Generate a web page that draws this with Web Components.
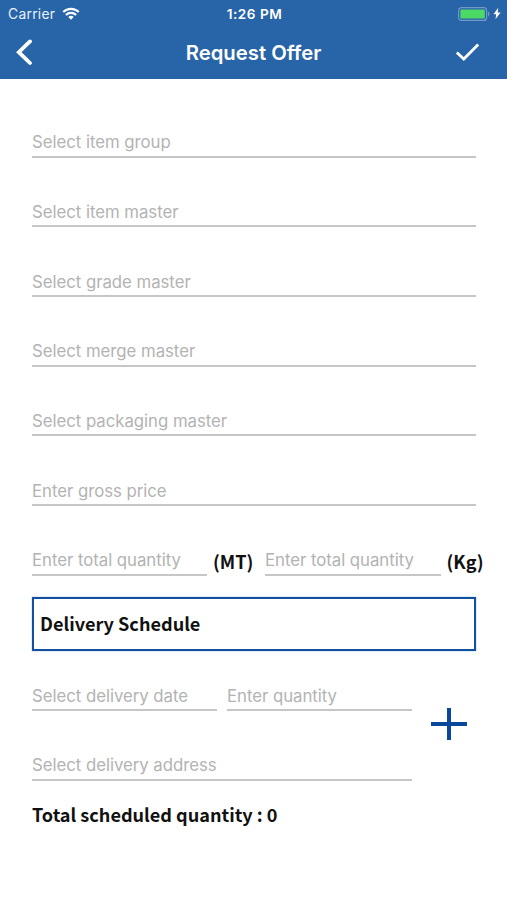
<!DOCTYPE html>
<html lang="en">
<head>
<meta charset="UTF-8">
<meta name="viewport" content="width=device-width, initial-scale=1.0">
<title>Request Offer</title>
<style>
  body {
    margin: 0;
    background: #fff;
    font-family: Inter, "Liberation Sans", sans-serif;
  }
</style>
</head>
<body>
<offer-screen></offer-screen>

<script>
class StatusBar extends HTMLElement {
    connectedCallback() {
        this.attachShadow({ mode: 'open' });
        this.shadowRoot.innerHTML = `
      <style>
        :host {
          display: grid;
          grid-template-columns: 1fr auto 1fr;
          align-items: center;
          height: 27px;
          padding: 0 6px 0 8px;
          color: #e9f1fa;
          font-size: 13.8px;
          line-height: 27px;
        }
        .left, .right {
          display: flex;
          align-items: center;
        }
        .left {
          gap: 7px;
          letter-spacing: 0.3px;
        }
        .right {
          justify-content: flex-end;
          gap: 3px;
        }
        .right, .left svg {
          position: relative;
          top: -0.5px;
        }
        .time {
          padding-top: 1px;
          color: #fff;
          font-weight: 600;
          font-size: 13.6px;
          letter-spacing: 0.5px;
        }
        svg {
          display: block;
        }
      </style>
      <div class="left">
        <span>Carrier</span>
        <svg width="18" height="13" viewBox="0 0 18 13" fill="none" stroke="#fff" stroke-width="2.1">
          <path d="M1.2 5.1a11 11 0 0 1 15.6 0"/>
          <path d="M3.9 8a7.2 7.2 0 0 1 10.2 0"/>
          <path d="M9 12.7 6.3 10a3.8 3.8 0 0 1 5.4 0Z" fill="#fff" stroke="none"/>
        </svg>
      </div>
      <span class="time">1:26 PM</span>
      <div class="right">
        <svg width="32" height="14" viewBox="0 0 32 14">
          <rect x=".6" y=".6" width="28" height="12.8" rx="3" fill="none" stroke="#7399c6" stroke-width="1.2"/>
          <rect x="2.4" y="2.4" width="24.4" height="9.2" rx="1.2" fill="#4cd964"/>
          <path d="M30 4.6c2 .8 2 4 0 4.8Z" fill="#7399c6"/>
        </svg>
        <svg width="8" height="13" viewBox="0 0 8 13">
          <path d="M5.2.8.5 7.3h2.7L2.5 12.2 7.6 5.4H4.7Z" fill="#fff"/>
        </svg>
      </div>
    `;
    }
}
customElements.define('status-bar', StatusBar);

class NavHeader extends HTMLElement {
    connectedCallback() {
        this.attachShadow({ mode: 'open' });
        this.shadowRoot.innerHTML = `
      <style>
        :host {
          display: grid;
          grid-template-columns: 1fr auto 1fr;
          align-items: center;
          height: 52px;
          padding: 0 27px 0 15px;
          color: #fff;
        }
        h1 {
          margin: 0 0 1px 12px;
          font-size: 20.3px;
          font-weight: 600;
          line-height: 24px;
        }
        button {
          display: block;
          padding: 0;
          border: 0;
          background: none;
          color: inherit;
        }
        .done {
          justify-self: end;
          margin-bottom: 2px;
        }
        svg {
          display: block;
        }
      </style>
      <button aria-label="Back">
        <svg width="18" height="28" viewBox="0 0 18 28" fill="none" stroke="currentColor" stroke-width="3.8">
          <path d="M15 2.4 3.8 13.2 15 24" stroke-linecap="round"/>
        </svg>
      </button>
      <h1><slot></slot></h1>
      <button class="done" aria-label="Done">
        <svg width="25" height="20" viewBox="0 0 25 20" fill="none" stroke="currentColor" stroke-width="2.8">
          <path d="M1.8 10.5 8.8 17 23.2 2.4"/>
        </svg>
      </button>
    `;
    }
}
customElements.define('nav-header', NavHeader);

class FormField extends HTMLElement {
    connectedCallback() {
        this.attachShadow({ mode: 'open' });
        this.shadowRoot.innerHTML = `
      <style>
        :host {
          display: flex;
          flex-direction: column;
          justify-content: flex-end;
          box-sizing: border-box;
          height: 69.67px;
          padding-bottom: 2.4px;
          border-bottom: 2px solid #c6c6c6;
          color: #b3b3b3;
          font-size: 16.8px;
          line-height: 22px;
          letter-spacing: -0.04px;
          white-space: nowrap;
        }
      </style>
      <slot></slot>
    `;
    }
}
customElements.define('form-field', FormField);

class SectionBox extends HTMLElement {
    connectedCallback() {
        this.attachShadow({ mode: 'open' });
        this.shadowRoot.innerHTML = `
      <style>
        :host {
          display: flex;
          align-items: center;
          box-sizing: border-box;
          height: 54px;
          padding: 0 6px 2px;
          border: 2px solid #10509c;
          box-shadow: 0 0 1px #5c92cc;
        }
      </style>
      <slot></slot>
    `;
    }
}
customElements.define('section-box', SectionBox);

class OfferScreen extends HTMLElement {
    connectedCallback() {
        this.attachShadow({ mode: 'open' });
        this.shadowRoot.innerHTML = `
      <style>
        :host {
          display: block;
          min-height: 900px;
          background: #fff;
        }
        header {
          height: 79px;
          background: #2864a8;
        }
        main {
          padding: 9px 31px 0 32px;
        }
        .strong {
          color: #111;
          font-family: "Noto Sans CJK JP", sans-serif;
          font-size: 18.1px;
          font-weight: 700;
          line-height: 26px;
          white-space: nowrap;
        }
        .quantities {
          display: grid;
          grid-template-columns: 175px 52px 175px 42px;
          align-items: end;
          margin-right: -8px;
        }
        .unit {
          padding: 0 0 2px 6px;
        }
        section-box {
          margin-top: 21px;
        }
        .schedule {
          display: grid;
          grid-template-columns: 380px 1fr;
          margin-top: -9.2px;
        }
        .pair {
          display: grid;
          grid-template-columns: 1fr 1fr;
          gap: 10px;
        }
        .add {
          align-self: center;
          justify-self: end;
          margin: 26px 9px 0 0;
          padding: 0;
          border: 0;
          background: none;
        }
        .add svg {
          display: block;
        }
        .total {
          margin: 20px 0 0;
        }
      </style>
      <header>
        <status-bar></status-bar>
        <nav-header>Request Offer</nav-header>
      </header>
      <main>
        <form-field>Select item group</form-field>
        <form-field>Select item master</form-field>
        <form-field>Select grade master</form-field>
        <form-field>Select merge master</form-field>
        <form-field>Select packaging master</form-field>
        <form-field>Enter gross price</form-field>
        <div class="quantities">
          <form-field>Enter total quantity</form-field>
          <span class="strong unit">(MT)</span>
          <form-field style="margin-left: 6px; margin-right: -7px">Enter total quantity</form-field>
          <span class="strong unit" style="padding-left: 12.5px">(Kg)</span>
        </div>
        <section-box><span class="strong">Delivery Schedule</span></section-box>
        <div class="schedule">
          <div>
            <div class="pair">
              <form-field>Select delivery date</form-field>
              <form-field>Enter quantity</form-field>
            </div>
            <form-field>Select delivery address</form-field>
          </div>
          <button class="add" aria-label="Add delivery">
            <svg width="36" height="32" viewBox="0 0 36 32" stroke="#08479b" stroke-width="4">
              <path d="M0 16h36M18 0v32"/>
            </svg>
          </button>
        </div>
        <p class="strong total">Total scheduled quantity : 0</p>
      </main>
    `;
    }
}
customElements.define('offer-screen', OfferScreen);
</script>
</body>
</html>
